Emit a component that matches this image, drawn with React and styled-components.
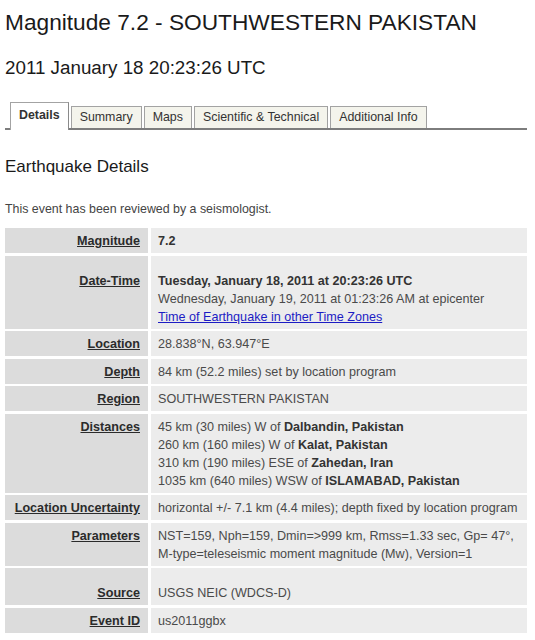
import React from "react";
import styled, { createGlobalStyle } from "styled-components";

const GlobalStyle = createGlobalStyle`
  html, body {
    margin: 0;
    padding: 0;
    background: #ffffff;
  }
  body {
    font-family: "Liberation Sans", Arial, Helvetica, sans-serif;
    color: #333333;
  }
`;

const Page = styled.div`
  padding: 10px 8px 6px 5px;
`;

const Title = styled.h1`
  margin: 0;
  font-size: 22.7px;
  line-height: 24px;
  font-weight: normal;
  color: #1a1a1a;
`;

const SubTitle = styled.h2`
  margin: 23px 0 0;
  font-size: 18.8px;
  line-height: 22px;
  font-weight: normal;
  color: #1a1a1a;
`;

const TabBar = styled.ul`
  list-style: none;
  margin: 23px 0 0;
  padding: 0 0 0 5px;
  display: flex;
  align-items: flex-end;
  gap: 2px;
  border-bottom: 2px solid #7d7d7d;
`;

const Tab = styled.li`
  font-size: 12.4px;
  line-height: 15px;
  padding: ${(p) => (p.$active ? "5px 8px 7px" : "3px 8px 3px")};
  margin-bottom: ${(p) => (p.$active ? "-2px" : "0")};
  background: ${(p) => (p.$active ? "#ffffff" : "#f4f4ec")};
  font-weight: ${(p) => (p.$active ? "bold" : "normal")};
  color: #333333;
  border: 1px solid #a3a3a3;
  border-right-color: ${(p) => (p.$active ? "#8a8a8a" : "#a0a0a0")};
  border-bottom: none;
  white-space: nowrap;
`;

const Heading = styled.h3`
  margin: 27px 0 0;
  font-size: 17px;
  line-height: 20px;
  font-weight: normal;
  color: #1a1a1a;
`;

const Note = styled.p`
  margin: 23px 0 0;
  font-size: 12.4px;
  line-height: 18px;
  color: #444444;
`;

const DetailGrid = styled.div`
  margin-top: 10px;
  display: grid;
  grid-template-columns: 143px 376px;
  column-gap: 3px;
  row-gap: 2.5px;
  font-size: 12.6px;
  line-height: 18px;
`;

const Label = styled.div`
  background: #dcdcdc;
  padding: ${(p) => (p.$extra ? "16px" : "4px")} 8px 3px 0;
  text-align: right;
  font-weight: bold;
  color: #2b2b2b;
  text-decoration: underline;
  white-space: nowrap;
`;

const Value = styled.div`
  background: #ececec;
  padding: ${(p) => (p.$extra ? "16px" : "4px")} 2px 3px 7px;
  color: #4a4a4a;
  white-space: nowrap;
`;

const Line = styled.div`
  font-weight: ${(p) => (p.$bold ? "bold" : "normal")};
  color: ${(p) => (p.$bold ? "#333333" : "inherit")};
`;

const Strong = styled.b`
  color: #333333;
`;

const Link = styled.a`
  color: #1c1cc4;
  text-decoration: underline;
`;

const tabs = ["Details", "Summary", "Maps", "Scientific & Technical", "Additional Info"];

const rows = [
  { label: "Magnitude", content: <Line $bold>7.2</Line> },
  {
    label: "Date-Time",
    extra: true,
    content: (
      <>
        <Line $bold>Tuesday, January 18, 2011 at 20:23:26 UTC</Line>
        <Line>Wednesday, January 19, 2011 at 01:23:26 AM at epicenter</Line>
        <Line>
          <Link href="#">Time of Earthquake in other Time Zones</Link>
        </Line>
      </>
    ),
  },
  { label: "Location", content: <Line>28.838°N, 63.947°E</Line> },
  { label: "Depth", content: <Line>84 km (52.2 miles) set by location program</Line> },
  { label: "Region", content: <Line>SOUTHWESTERN PAKISTAN</Line> },
  {
    label: "Distances",
    content: (
      <>
        <Line>45 km (30 miles) W of <Strong>Dalbandin, Pakistan</Strong></Line>
        <Line>260 km (160 miles) W of <Strong>Kalat, Pakistan</Strong></Line>
        <Line>310 km (190 miles) ESE of <Strong>Zahedan, Iran</Strong></Line>
        <Line>1035 km (640 miles) WSW of <Strong>ISLAMABAD, Pakistan</Strong></Line>
      </>
    ),
  },
  {
    label: "Location Uncertainty",
    content: <Line>horizontal +/- 7.1 km (4.4 miles); depth fixed by location program</Line>,
  },
  {
    label: "Parameters",
    content: (
      <>
        <Line>NST=159, Nph=159, Dmin=&gt;999 km, Rmss=1.33 sec, Gp= 47°,</Line>
        <Line>M-type=teleseismic moment magnitude (Mw), Version=1</Line>
      </>
    ),
  },
  { label: "Source", extra: true, content: <Line>USGS NEIC (WDCS-D)</Line> },
  { label: "Event ID", content: <Line>us2011ggbx</Line> },
];

export default function App() {
  return (
    <>
      <GlobalStyle />
      <Page>
        <Title>Magnitude 7.2 - SOUTHWESTERN PAKISTAN</Title>
        <SubTitle>2011 January 18 20:23:26 UTC</SubTitle>
        <TabBar>
          {tabs.map((t, i) => (
            <Tab key={t} $active={i === 0}>
              {t}
            </Tab>
          ))}
        </TabBar>
        <Heading>Earthquake Details</Heading>
        <Note>This event has been reviewed by a seismologist.</Note>
        <DetailGrid>
          {rows.map((r) => (
            <React.Fragment key={r.label}>
              <Label $extra={r.extra}>{r.label}</Label>
              <Value $extra={r.extra}>{r.content}</Value>
            </React.Fragment>
          ))}
        </DetailGrid>
      </Page>
    </>
  );
}
